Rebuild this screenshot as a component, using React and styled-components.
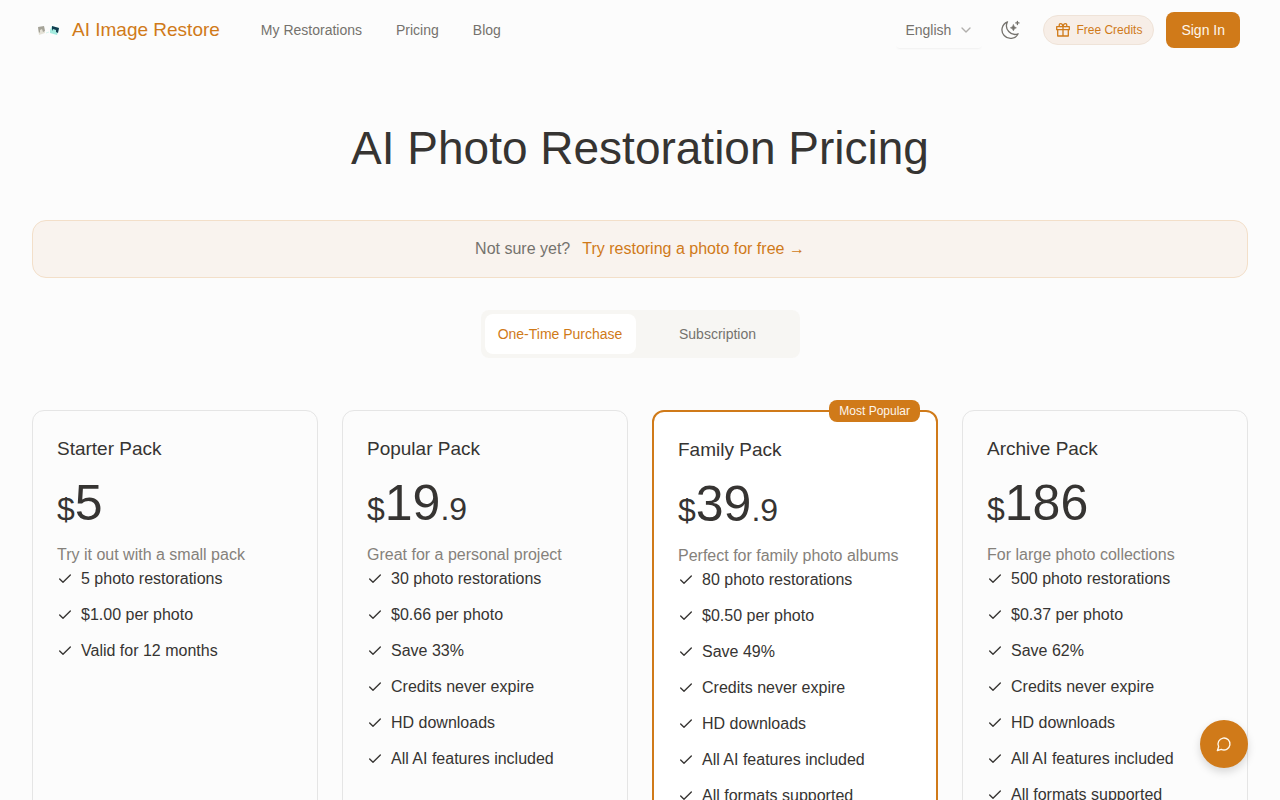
import React from 'react'
import styled, { createGlobalStyle } from 'styled-components'
import { Check, ChevronDown } from 'lucide-react'

const GlobalStyle = createGlobalStyle`
  * {
    box-sizing: border-box;
  }

  body {
    margin: 0;
    background: #fcfcfc;
    color: #363432;
    font-family: "Liberation Sans", Arial, sans-serif;
    font-size: 16px;
    line-height: 24px;
  }

  button, select {
    font-family: inherit;
  }

  h1, h2, p, ul {
    margin: 0;
    padding: 0;
    font-weight: 400;
  }
`;

const Header = styled.header`
  display: flex;
  align-items: center;
  justify-content: space-between;
  padding: 12px 40px 12px 36px;
`;

const HeaderSide = styled.div`
  display: flex;
  align-items: center;
`;

const Brand = styled.a`
  display: flex;
  align-items: center;
  gap: 12px;
  color: #d07a19;
  font-size: 19px;
  line-height: 28px;
  text-decoration: none;
`;

const Nav = styled.nav`
  display: flex;
  gap: 34px;
  margin-left: 41px;
`;

const NavLink = styled.a`
  color: #75726d;
  font-size: 14px;
  line-height: 20px;
  text-decoration: none;
`;

const Language = styled.label`
  display: grid;
  align-items: center;
  width: 86px;
  border-radius: 4px;
  box-shadow: 0 2px 2px -1px rgba(0, 0, 0, 0.05);
  color: #75726d;

  > * {
    grid-area: 1 / 1;
  }

  svg {
    justify-self: end;
    margin-right: 8px;
    color: #b1afac;
    pointer-events: none;
  }
`;

const LanguageSelect = styled.select`
  appearance: none;
  width: 100%;
  height: 36px;
  padding: 0 28px 0 9px;
  border: 0;
  background: transparent;
  color: inherit;
  font-size: 14px;
`;

const ThemeButton = styled.button`
  display: flex;
  margin: 0 23px 0 18px;
  padding: 0;
  border: 0;
  background: none;
  color: #75726d;
`;

const CreditsLink = styled.a`
  display: flex;
  align-items: center;
  gap: 5px;
  height: 30px;
  margin-right: 12px;
  padding: 0 11px;
  border: 1px solid #efe3d8;
  border-radius: 15px;
  background: #f7eee7;
  color: #d07a19;
  font-size: 12px;
  text-decoration: none;
`;

const SignIn = styled.button`
  height: 36px;
  padding: 0 15px;
  border: 0;
  border-radius: 8px;
  background: #d07a19;
  color: #fdf6ec;
  font-size: 14px;
`;

const Main = styled.main`
  padding: 60px 32px 48px;
`;

const PageTitle = styled.h1`
  font-size: 46px;
  line-height: 56px;
  text-align: center;
`;

const Banner = styled.section`
  display: flex;
  justify-content: center;
  gap: 12px;
  margin-top: 44px;
  padding: 16px;
  border: 1px solid #f3dfc9;
  border-radius: 14px;
  background: #f9f3ee;
  color: #75726d;
`;

const BannerLink = styled.a`
  color: #d07a19;
  text-decoration: none;
`;

const Tabs = styled.div`
  display: grid;
  grid-template-columns: 151px 156px;
  gap: 4px;
  width: fit-content;
  margin: 32px auto 52px;
  padding: 4px;
  border-radius: 8px;
  background: #f7f6f3;
`;

const Tab = styled.button`
  height: 40px;
  padding: 0;
  border: 0;
  border-radius: 8px;
  background: ${(props) => (props.$active ? '#ffffff' : 'transparent')};
  color: ${(props) => (props.$active ? '#d07a19' : '#75726d')};
  font-size: 14px;
`;

const Plans = styled.div`
  display: grid;
  grid-template-columns: repeat(4, 1fr);
  gap: 24px;
`;

const Card = styled.article`
  position: relative;
  padding: 24px;
  border: ${(props) => (props.$featured ? '2px solid #d07a19' : '1px solid #e5e5e5')};
  border-radius: 12px;
  background: ${(props) => (props.$featured ? '#ffffff' : '#fcfcfc')};
`;

const Badge = styled.span`
  position: absolute;
  top: -12px;
  right: 16px;
  padding: 0 10px;
  border-radius: 8px;
  background: #d07a19;
  color: #fdf6ec;
  font-size: 12px;
  line-height: 22px;
`;

const PlanName = styled.h2`
  font-size: 19px;
  line-height: 28px;
`;

const Price = styled.p`
  margin-top: 16px;
  font-size: 50px;
  line-height: 48px;
`;

const Small = styled.span`
  font-size: 32px;
  line-height: 32px;
`;

const Description = styled.p`
  margin-top: 16px;
  color: #85817b;
`;

const Features = styled.ul`
  display: grid;
  gap: 12px;
  list-style: none;
`;

const Feature = styled.li`
  display: flex;
  align-items: center;
  gap: 8px;
`;

const ChatButton = styled.button`
  position: fixed;
  right: 32px;
  bottom: 32px;
  display: flex;
  align-items: center;
  justify-content: center;
  width: 48px;
  height: 48px;
  padding: 0;
  border: 0;
  border-radius: 50%;
  background: #d07a19;
  box-shadow: 0 4px 8px rgba(0, 0, 0, 0.15);
  color: #fff8ec;
`;

const extras = ['Credits never expire', 'HD downloads', 'All AI features included'];

const plans = [
  {
    name: 'Starter Pack',
    price: '5',
    description: 'Try it out with a small pack',
    features: ['5 photo restorations', '$1.00 per photo', 'Valid for 12 months'],
  },
  {
    name: 'Popular Pack',
    price: '19',
    cents: '.9',
    description: 'Great for a personal project',
    features: ['30 photo restorations', '$0.66 per photo', 'Save 33%', ...extras],
  },
  {
    name: 'Family Pack',
    price: '39',
    cents: '.9',
    description: 'Perfect for family photo albums',
    features: ['80 photo restorations', '$0.50 per photo', 'Save 49%', ...extras, 'All formats supported'],
    featured: true,
  },
  {
    name: 'Archive Pack',
    price: '186',
    description: 'For large photo collections',
    features: ['500 photo restorations', '$0.37 per photo', 'Save 62%', ...extras, 'All formats supported'],
  },
];

const Logo = () => (
  <svg width="24" height="24" viewBox="0 0 24 24" aria-hidden="true">
    <path d="M2 10l6-1 1 6-6 2z" fill="#e4e1d6" />
    <path d="M2 9l6-1 1 5-2 1-1-3-2 1v2l-1 1z" fill="#a5a398" />
    <path d="M10 15l3-1" stroke="#d9f4ee" />
    <path d="M14 12l2-4 7 2-2 7-7-2z" fill="#a4ebdf" />
    <path d="M16 8l7 2-1 5-2-1v-2l-3-1-1 2z" fill="#123d50" />
  </svg>
)

const MoonIcon = () => (
  <svg width="20" height="20" viewBox="0 0 20 20" fill="none" stroke="currentColor" strokeWidth="1.3" strokeLinecap="round" strokeLinejoin="round" aria-hidden="true">
    <path d="M7.5 1.8a8.6 8.6 0 1 0 10.7 12A8.6 8.6 0 0 1 7.5 1.8z" />
    <path d="M13.4 4.8q.5 2.5 3 3-2.5.5-3 3-.5-2.5-3-3 2.5-.5 3-3z" fill="currentColor" strokeWidth=".6" />
    <path d="M17.4 1.3v3.2M15.8 2.9h3.2" />
  </svg>
)

const GiftIcon = () => (
  <svg width="16" height="16" viewBox="0 0 16 16" fill="none" stroke="currentColor" strokeWidth="1.3" strokeLinejoin="round" aria-hidden="true">
    <path d="M1.7 4.7h12.6v3H1.7zM2.7 7.7v6.3h10.6V7.7M8 4.7V14" />
    <path d="M8 4.5C7.5 2.5 6.7 1.7 5.7 1.7c-2.1 0-2.1 2.9 0 3M8 4.5c.5-2 1.3-2.8 2.3-2.8 2.1 0 2.1 2.9 0 3" />
  </svg>
)

const ChatIcon = () => (
  <svg width="16" height="16" viewBox="0 0 24 24" fill="none" stroke="currentColor" strokeWidth="2" strokeLinecap="round" strokeLinejoin="round" aria-hidden="true">
    <path d="M7.9 20A9 9 0 1 0 4 16.1L2 22Z" />
  </svg>
)

const PlanCard = ({ plan }) => (
  <Card $featured={plan.featured}>
    {plan.featured && <Badge>Most Popular</Badge>}
    <PlanName>{plan.name}</PlanName>
    <Price>
      <Small>$</Small>{plan.price}{plan.cents && <Small>{plan.cents}</Small>}
    </Price>
    <Description>{plan.description}</Description>
    <Features>
      {plan.features.map((feature) => (
        <Feature key={feature}>
          <Check size={16} strokeWidth={2} />
          {feature}
        </Feature>
      ))}
    </Features>
  </Card>
)

const App = () => {
  return (
    <>
      <GlobalStyle />
      <Header>
        <HeaderSide>
          <Brand href="#home"><Logo />AI Image Restore</Brand>
          <Nav>
            <NavLink href="#restorations">My Restorations</NavLink>
            <NavLink href="#pricing">Pricing</NavLink>
            <NavLink href="#blog">Blog</NavLink>
          </Nav>
        </HeaderSide>
        <HeaderSide>
          <Language>
            <LanguageSelect aria-label="Language">
              <option>English</option>
            </LanguageSelect>
            <ChevronDown size={16} strokeWidth={2} />
          </Language>
          <ThemeButton aria-label="Toggle theme"><MoonIcon /></ThemeButton>
          <CreditsLink href="#credits"><GiftIcon />Free Credits</CreditsLink>
          <SignIn>Sign In</SignIn>
        </HeaderSide>
      </Header>
      <Main>
        <PageTitle>AI Photo Restoration Pricing</PageTitle>
        <Banner>
          <span>Not sure yet?</span>
          <BannerLink href="#try">Try restoring a photo for free →</BannerLink>
        </Banner>
        <Tabs role="tablist">
          <Tab role="tab" aria-selected="true" $active>One-Time Purchase</Tab>
          <Tab role="tab" aria-selected="false">Subscription</Tab>
        </Tabs>
        <Plans>
          {plans.map((plan) => <PlanCard key={plan.name} plan={plan} />)}
        </Plans>
      </Main>
      <ChatButton aria-label="Open chat"><ChatIcon /></ChatButton>
    </>
  )
}

export default App
